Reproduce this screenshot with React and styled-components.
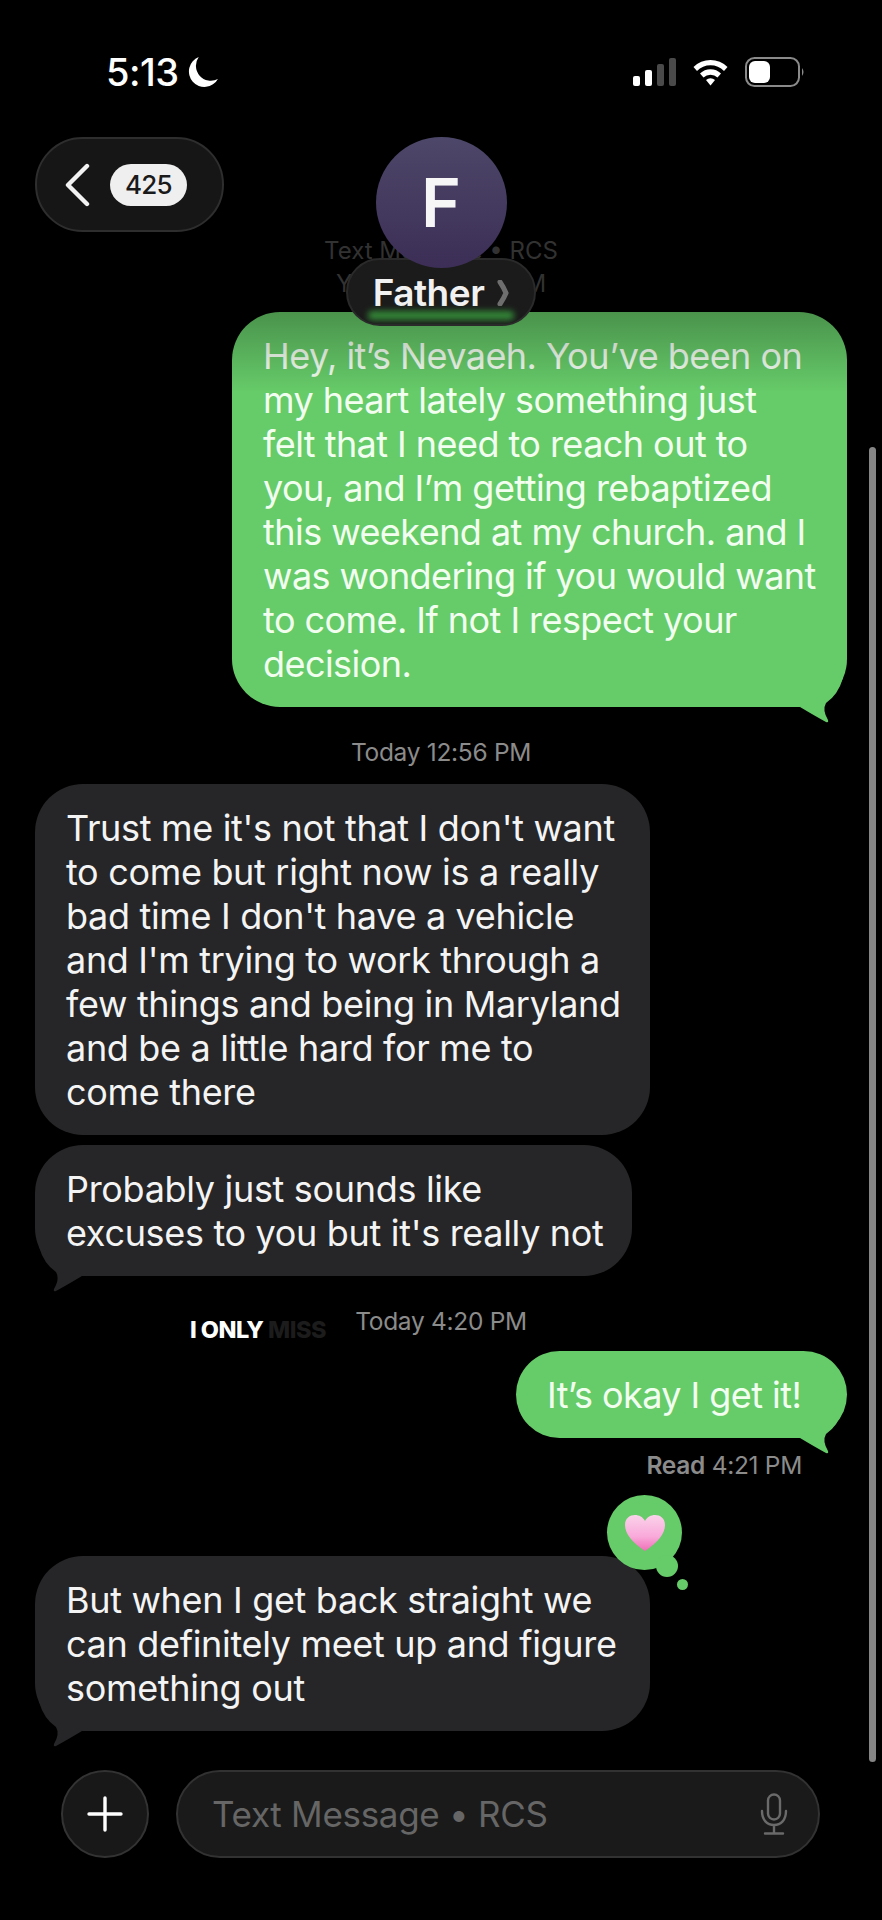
import React from "react";
import styled, { createGlobalStyle } from "styled-components";

const Global = createGlobalStyle`
  html, body { margin: 0; padding: 0; background: #000; }
  * { box-sizing: border-box; }
`;
const FONT = `Inter, "Liberation Sans", sans-serif`;

const Screen = styled.div`
  position: relative; width: 882px; height: 1920px; background: #000; overflow: hidden;
  font-family: ${FONT}; color: #fff; -webkit-font-smoothing: antialiased;
`;
const StatusBar = styled.div`
  height: 94px; padding: 50px 77px 0 106px; display: flex; justify-content: space-between; align-items: center;
`;
const StatusLeft = styled.div`display: flex; align-items: center; gap: 8px;`;
const Clock = styled.span`font-size: 38px; font-weight: 500; letter-spacing: -.5px; line-height: 44px;`;
const StatusRight = styled.div`display: flex; align-items: center; gap: 16px;`;

const Header = styled.header`position: relative; height: 218px; padding: 43px 0 0 35px;`;
const BackPill = styled.div`
  width: 189px; height: 95px; border-radius: 48px; background: #161616; border: 2px solid #2e2e2e;
  display: flex; align-items: center; gap: 20px; padding-left: 27px;
`;
const Count = styled.span`
  width: 77px; height: 42px; border-radius: 21px; background: #efefef; color: #1a1a1a;
  font-size: 26px; font-weight: 500; letter-spacing: -.8px; display: flex; align-items: center; justify-content: center;
`;
const Contact = styled.div`
  position: absolute; z-index: 5; top: 43px; left: 0; right: 0; display: flex; flex-direction: column; align-items: center;
`;
const FadedMeta = styled.div`
  position: absolute; top: 140px; left: 0; right: 0; text-align: center; color: #323232; font-size: 24px; line-height: 33px;
`;
const Avatar = styled.div`
  position: relative; z-index: 2; width: 131px; height: 131px; border-radius: 50%;
  background: linear-gradient(#4d4769, #3c2e56); display: flex; align-items: center; justify-content: center;
  font-size: 68px; font-weight: 600; color: #f6f6f6; padding-bottom: 2px;
`;
const NamePill = styled.div`
  position: relative; z-index: 1; margin-top: -10px; width: 190px; height: 68px; border-radius: 34px; background: #1b1b1b; border: 2px solid #2a2a2a;
  display: flex; align-items: center; justify-content: center; gap: 13px; overflow: hidden; padding-top: 1px;
  font-size: 37px; font-weight: 600; letter-spacing: -.5px; color: #f1f1f1;
`;
const Glow = styled.span`
  position: absolute; left: 20px; right: 20px; bottom: 4px; height: 9px; border-radius: 4px; background: #348a38; filter: blur(3px);
`;

const Thread = styled.main`position: relative; display: flex; flex-direction: column; padding: 0 35px;`;
const TopFade = styled.div`
  position: absolute; z-index: 3; top: 0; left: 0; right: 0; height: 80px; background: linear-gradient(rgba(0,0,0,.28), rgba(0,0,0,0));
`;
const Bubble = styled.div`
  position: relative; width: ${p => p.$w}px; margin-top: ${p => p.$mt || 0}px; align-self: ${p => (p.$me ? "flex-end" : "flex-start")};
  padding: 22px 10px 21px 31px; border-radius: 48px; background: ${p => (p.$me ? "#66cb69" : "#262628")}; color: ${p => (p.$me ? "#f2fff0" : "#f4f4f4")};
  font-size: 36px; line-height: 44px; letter-spacing: ${p => (p.$me ? "-.55px" : "-.32px")}; white-space: pre;
`;
const Tail = styled.svg`
  position: absolute; bottom: -16px; width: 50px; height: 50px; ${p => (p.$me ? "right: 0;" : "left: 0; transform: scaleX(-1);")}
`;
const Stamp = styled.div`
  position: relative; margin-top: ${p => p.$mt}px; height: 30px; line-height: 30px; text-align: ${p => p.$right ? "right" : "center"};
  padding-right: ${p => (p.$right ? 45 : 0)}px; font-size: 24.5px; color: #8b8b8b; letter-spacing: -.3px;
`;
const Strong = styled.span`font-weight: 600;`;
const Promo = styled.span`
  position: absolute; left: 155px; top: 11px; font-size: 23.5px; font-weight: 800; letter-spacing: -.5px; color: #fff; line-height: 26px;
`;
const PromoDim = styled.span`color: #1c1c1c;`;

const Tapback = styled.div`
  position: absolute; left: 572px; top: -61px; width: 75px; height: 75px; border-radius: 50%; background: #66cb69;
  display: flex; align-items: center; justify-content: center;
`;
const TapDot = styled.span`
  position: absolute; border-radius: 50%; background: #66cb69;
  left: ${p => p.$x}px; top: ${p => p.$y}px; width: ${p => p.$d}px; height: ${p => p.$d}px;
`;

const Composer = styled.footer`display: flex; align-items: center; gap: 27px; margin-top: 39px; padding-left: 26px;`;
const PlusButton = styled.div`
  width: 88px; height: 88px; border-radius: 50%; background: #181818; border: 2px solid #333; display: flex; align-items: center; justify-content: center;
`;
const Field = styled.div`
  width: 644px; height: 88px; border-radius: 44px; background: #1a1a1a; border: 2px solid #323232;
  display: flex; align-items: center; justify-content: space-between; padding: 0 30px 0 34px;
`;
const Placeholder = styled.span`font-size: 35px; letter-spacing: -.3px; color: #666;`;
const Scrollbar = styled.div`
  position: absolute; left: 869px; top: 447px; width: 7px; height: 1315px; border-radius: 4px; background: #858585;
`;

const BUBBLE1 = `Hey, it’s Nevaeh. You’ve been on
my heart lately something just
felt that I need to reach out to
you, and I’m getting rebaptized
this weekend at my church. and I
was wondering if you would want
to come. If not I respect your
decision.`;
const BUBBLE2 = `Trust me it's not that I don't want
to come but right now is a really
bad time I don't have a vehicle
and I'm trying to work through a
few things and being in Maryland
and be a little hard for me to
come there`;
const BUBBLE3 = `Probably just sounds like
excuses to you but it's really not`;
const BUBBLE4 = `But when I get back straight we
can definitely meet up and figure
something out`;

const BubbleTail = ({ me }) => (
  <Tail $me={me} viewBox="0 0 50 50">
    <path d="M3 34 Q18 43 29 49 Q32 50 31 47 Q25 37 29 30 Q41 22 46 5 L20 5 Z" fill={me ? "#66cb69" : "#262628"} />
  </Tail>
);

export default function App() {
  return (
    <Screen>
      <Global />
      <StatusBar>
        <StatusLeft>
          <Clock>5:13</Clock>
          <svg width="32" height="32" viewBox="0 0 30 30">
            <path d="M11 1 A14.5 14.5 0 1 0 29 21.5 A14 14 0 0 1 11 1 Z" fill="#fff" />
          </svg>
        </StatusLeft>
        <StatusRight>
          <svg width="43" height="28" viewBox="0 0 43 28">
            <rect x="0" y="18" width="7" height="10" rx="2" fill="#fff" />
            <rect x="12" y="12" width="7" height="16" rx="2" fill="#fff" />
            <rect x="24" y="6" width="7" height="22" rx="2" fill="#4a4a4a" />
            <rect x="36" y="0" width="7" height="28" rx="2" fill="#4a4a4a" />
          </svg>
          <svg width="37" height="28" viewBox="0 0 37 28">
            <path d="M1.5 9 A24 24 0 0 1 35.5 9 L32 13 A19 19 0 0 0 5 13 Z" fill="#fff" />
            <path d="M8 15.5 A15 15 0 0 1 29 15.5 L25.5 19.5 A10 10 0 0 0 11.5 19.5 Z" fill="#fff" />
            <path d="M14 22 A7 7 0 0 1 23 22 L18.5 27.5 Z" fill="#fff" />
          </svg>
          <svg width="60" height="30" viewBox="0 0 60 30">
            <rect x="1" y="1" width="53" height="28" rx="8.5" fill="none" stroke="#8a8a8a" strokeWidth="2" />
            <rect x="4" y="4" width="21" height="22" rx="6" fill="#fff" />
            <path d="M57 11 Q60 15 57 19 Z" fill="#8a8a8a" />
          </svg>
        </StatusRight>
      </StatusBar>

      <Header>
        <BackPill>
          <svg width="26" height="44" viewBox="0 0 26 44">
            <path d="M23 3 L4 22 L23 41" fill="none" stroke="#f2f2f2" strokeWidth="4.4" strokeLinecap="round" strokeLinejoin="round" />
          </svg>
          <Count>425</Count>
        </BackPill>
        <FadedMeta>Text Message • RCS<br />Yesterday 3:14 PM</FadedMeta>
        <Contact>
          <Avatar>F</Avatar>
          <NamePill>
            Father
            <svg width="12" height="26" viewBox="0 0 12 26">
              <path d="M3 2 Q7 8 9 13 Q7 18 3 24" fill="none" stroke="#6e6e6e" strokeWidth="5" strokeLinecap="round" />
            </svg>
            <Glow />
          </NamePill>
        </Contact>
      </Header>

      <Thread>
        <TopFade />
        <Bubble $me $w={615}>{BUBBLE1}<BubbleTail me /></Bubble>
        <Stamp $mt={30}>Today 12:56 PM</Stamp>
        <Bubble $w={615} $mt={17}>{BUBBLE2}</Bubble>
        <Bubble $w={597} $mt={10}>{BUBBLE3}<BubbleTail /></Bubble>
        <Stamp $mt={30}>
          <Promo>I ONLY <PromoDim>MISS</PromoDim></Promo>
          Today 4:20 PM
        </Stamp>
        <Bubble $me $w={331} $mt={15}>{"It’s okay I get it!"}<BubbleTail me /></Bubble>
        <Stamp $mt={12} $right><Strong>Read</Strong> 4:21 PM</Stamp>
        <Bubble $w={615} $mt={76}>
          {BUBBLE4}
          <BubbleTail />
          <Tapback>
            <svg width="42" height="38" viewBox="0 0 42 38">
              <defs>
                <linearGradient id="heart" x1="0" y1="0" x2="0" y2="1">
                  <stop offset="0" stopColor="#fbd3ea" />
                  <stop offset=".6" stopColor="#f9a9da" />
                  <stop offset="1" stopColor="#ee6fb6" />
                </linearGradient>
              </defs>
              <path d="M21 37 C8 28 1 20 1 11 C1 4 6 1 11 1 C15 1 19 3 21 7 C23 3 27 1 31 1 C36 1 41 4 41 11 C41 20 34 28 21 37 Z" fill="url(#heart)" />
            </svg>
            <TapDot $x={49} $y={60} $d={22} />
            <TapDot $x={70} $y={84} $d={11} />
          </Tapback>
        </Bubble>
        <Composer>
          <PlusButton>
            <svg width="36" height="36" viewBox="0 0 36 36">
              <path d="M18 2 V34 M2 18 H34" stroke="#fff" strokeWidth="3.4" strokeLinecap="round" />
            </svg>
          </PlusButton>
          <Field>
            <Placeholder>Text Message • RCS</Placeholder>
            <svg width="28" height="42" viewBox="0 0 28 42">
              <rect x="8" y="1.5" width="12" height="25" rx="6" fill="none" stroke="#6a6a6a" strokeWidth="2.4" />
              <path d="M2 18 C2 27 7 32 14 32 C21 32 26 27 26 18 M14 32 V40 M5 40.5 H23" fill="none" stroke="#6a6a6a" strokeWidth="2.4" strokeLinecap="round" />
            </svg>
          </Field>
        </Composer>
      </Thread>
      <Scrollbar />
    </Screen>
  );
}
